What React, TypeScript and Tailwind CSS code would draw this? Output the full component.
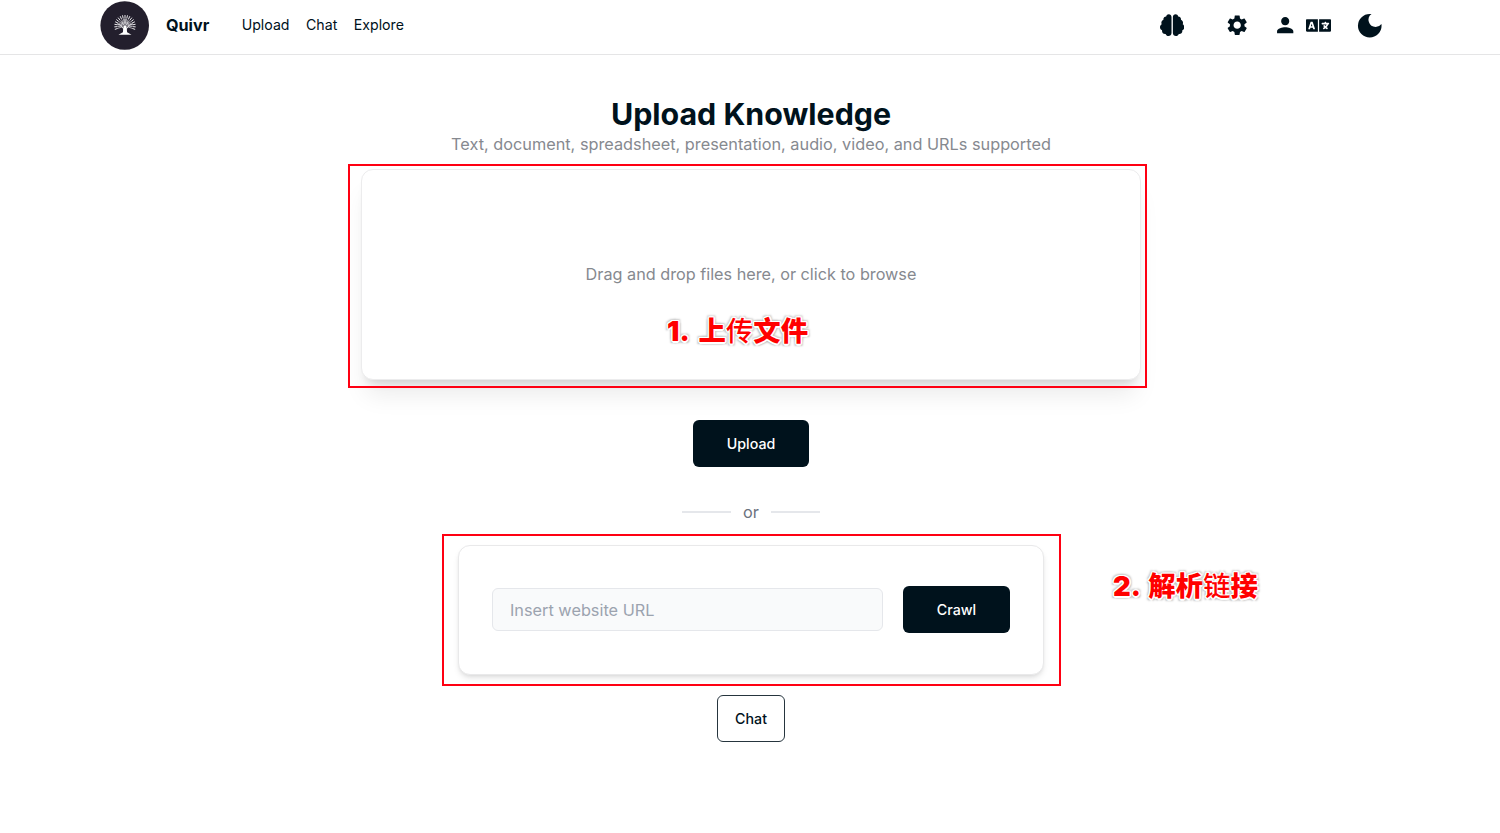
import React from "react";
import { FaBrain, FaLanguage } from "react-icons/fa";
import { MdDarkMode, MdPerson, MdSettings } from "react-icons/md";

const branches = Array.from({ length: 17 }, (_, i) => {
  const angle = Math.PI * (-0.1 + (1.2 * i) / 16);
  const dx = Math.cos(angle);
  const dy = -Math.sin(angle);
  return { dx, dy, key: i };
});

function Logo() {
  return (
    <svg viewBox="0 0 49 49" className="size-[49px] shrink-0">
      <circle cx="24.7" cy="24.5" r="24.3" fill="#231f2d" />
      <g stroke="#e9e8eb" fill="none" strokeLinecap="round">
        {branches.map(({ dx, dy, key }) => (
          <g key={key}>
            <path
              d={`M${25 + dx * 3} ${25 + dy * 3}L${25 + dx * 7} ${25 + dy * 7}`}
              strokeWidth="0.65"
            />
            <path
              d={`M${25 + dx * 8} ${25 + dy * 8.1}L${25 + dx * 10.3} ${25 + dy * 10.6}`}
              strokeWidth="1"
            />
          </g>
        ))}
        <path d="M25 31V18M24.5 29l-4-5-3-1M25.5 29l4-5 3-1M24.9 26l-3-5M25.1 26l3-5" strokeWidth="0.9" />
      </g>
      <path d="M23.5 25h3l.6 6.3 4.4 2.4H18.5l4.4-2.4z" fill="#fff" />
    </svg>
  );
}

function Note({ children, className }: { children: React.ReactNode; className: string }) {
  return (
    <div
      className={`absolute whitespace-nowrap font-['Inter','Noto_Sans_CJK_SC',sans-serif] text-[27.4px] leading-[40px] font-black text-[#ff0000] [text-shadow:1.5px_0_0_white,-1.5px_0_0_white,0_1.5px_0_white,0_-1.5px_0_white,1px_1px_0_white,-1px_1px_0_white,1px_-1px_0_white,-1px_-1px_0_white,2px_2px_2px_#bbb,-2px_2px_2px_#bbb,2px_-2px_2px_#ccc,-2px_-2px_2px_#ccc] ${className}`}
    >
      {children}
    </div>
  );
}

export default function App() {
  return (
    <div className="flex h-[833px] w-[1500px] flex-col overflow-hidden bg-white font-['Inter',sans-serif] text-[#00121c]">
      <header className="flex h-[55px] shrink-0 items-start border-b border-[#e5e5e6] pl-[100.4px]">
        <div className="flex h-[50px] items-center pt-px">
          <Logo />
          <span className="ml-[16.5px] w-[75.8px] text-[16.2px] font-bold">Quivr</span>
          <nav className="flex gap-[16.5px] pb-[2px] text-[14.15px]">
            <a>Upload</a>
            <a>Chat</a>
            <a>Explore</a>
          </nav>
        </div>
        <div className="ml-auto flex h-[51px] items-center pr-[114.5px]">
          <FaBrain className="mr-[40.4px] size-[24.4px]" />
          <MdSettings className="mr-[24.4px] size-[24.4px]" />
          <MdPerson className="mr-[7.8px] size-[24.4px]" />
          <FaLanguage className="mr-[23.5px] size-[25px]" />
          <MdDarkMode className="size-[31.5px]" />
        </div>
      </header>

      <main className="flex w-[1502px] flex-col items-center pt-[40px]">
        <h1 className="h-[37px] text-[30.4px] leading-[38px] font-bold">Upload Knowledge</h1>
        <p className="h-[37px] text-[16.3px] leading-[24px] text-[#86898f]">
          Text, document, spreadsheet, presentation, audio, video, and URLs supported
        </p>

        <section className="relative">
          <div className="flex h-[211px] w-[780px] items-center justify-center rounded-[12px] border border-[#ececed] bg-white text-[16.23px] text-[#86898f] shadow-[0_20px_25px_-5px_rgba(0,0,0,0.08),0_8px_10px_-6px_rgba(0,0,0,0.15)]">
            Drag and drop files here, or click to browse
          </div>
          <div className="absolute top-[-5.5px] left-[-13.5px] h-[224.5px] w-[799.5px] border-2 border-[#ff0012]" />
          <Note className="top-[142px] left-[306px]">
            <span className="mr-[5px]">1. </span>上<span className="font-medium">传</span>文件
          </Note>
        </section>

        <button className="mt-[40px] h-[47px] w-[116px] rounded-[6px] bg-[#00121c] text-[14.25px] font-medium text-white">
          Upload
        </button>

        <div className="mt-[32px] flex h-[26px] items-center gap-[12px] text-[16.3px] text-[#6b7280]">
          <span className="h-[2px] w-[49px] bg-[#e5e7eb]" />
          <span>or</span>
          <span className="h-[2px] w-[49px] bg-[#e5e7eb]" />
        </div>

        <section className="relative mt-[20px]">
          <div className="flex h-[130px] w-[586px] items-start rounded-[12px] border border-[#e9e9ea] bg-white pt-[40px] pl-[33px] shadow-[0_4px_6px_-1px_rgba(0,0,0,0.1),0_2px_4px_-2px_rgba(0,0,0,0.1)]">
            <input
              className="mt-[2px] h-[43px] w-[391px] rounded-[6px] border border-[#e5e7eb] bg-[#f9fafb] px-[17px] text-[16.3px] placeholder:text-[#9ca3af]"
              placeholder="Insert website URL"
            />
            <button className="ml-[20px] h-[47px] w-[107px] rounded-[6px] bg-[#00121c] text-[14.25px] font-medium text-white">
              Crawl
            </button>
          </div>
          <div className="absolute top-[-11px] left-[-16px] h-[152px] w-[618.5px] border-2 border-[#ff0012]" />
          <Note className="top-[21px] left-[655px]">
            <span className="mr-[3.5px]">2. </span>解析<span className="font-medium">链</span>接
          </Note>
        </section>

        <button className="mt-[20px] h-[47px] w-[67.5px] rounded-[6px] border border-[#26353e] bg-white text-[14.25px] font-medium">
          Chat
        </button>
      </main>
    </div>
  );
}
